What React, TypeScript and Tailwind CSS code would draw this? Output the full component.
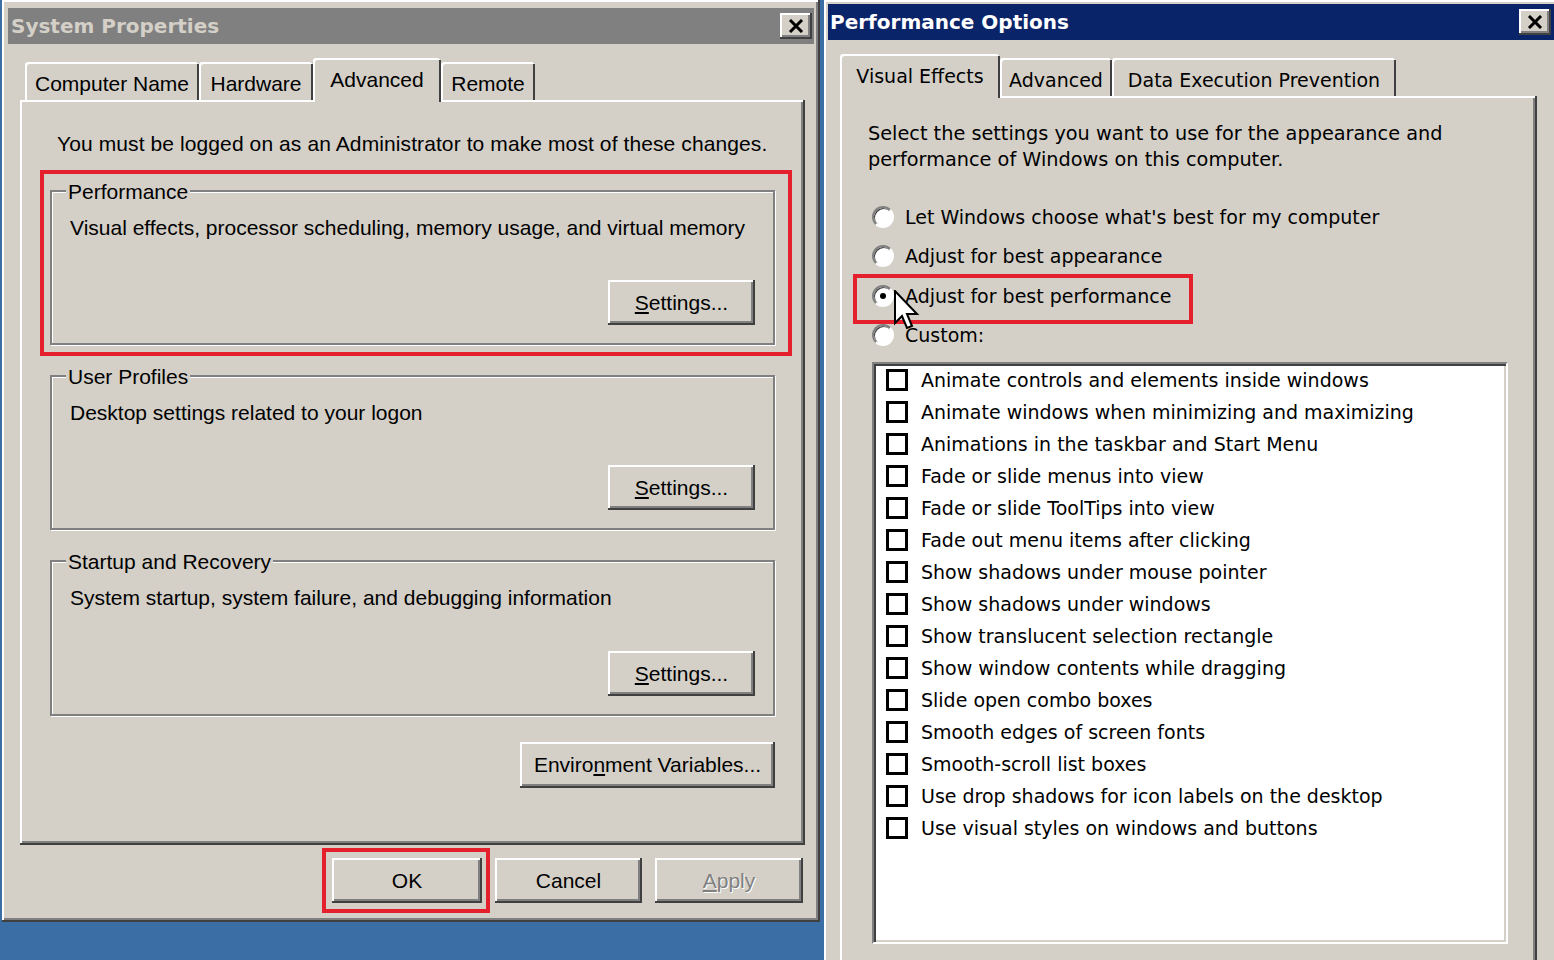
import type { ReactNode } from 'react'

const raised = 'shadow-[inset_-2px_-2px_#404040,inset_2px_2px_#ffffff,inset_-4px_-4px_#808080]'

function CloseBox() {
  return (
    <div className={`w-[32px] h-[26px] bg-[#d4d0c8] flex items-center justify-center ${raised}`}>
      <svg width="16" height="14" viewBox="0 0 16 14">
        <path d="M2 1 L14 13 M14 1 L2 13" stroke="#000" strokeWidth="3" />
      </svg>
    </div>
  )
}

function Button({ children, className = '', disabled = false }: { children: ReactNode; className?: string; disabled?: boolean }) {
  return (
    <div
      className={`flex items-center justify-center bg-[#d4d0c8] ${raised} ${className} ${
        disabled ? 'text-[#808080] [text-shadow:1px_1px_#ffffff]' : 'text-black'
      }`}
    >
      {children}
    </div>
  )
}

function GroupBox({ label, text, className }: { label: string; text: string; className: string }) {
  return (
    <div
      className={`relative mx-[30px] border-2 border-[#808080] shadow-[inset_1px_1px_#ffffff,1px_1px_#ffffff] flex flex-col justify-between ${className}`}
    >
      <span className="absolute top-[-13px] left-[14px] px-[2px] bg-[#d4d0c8] leading-[26px]">{label}</span>
      <div className="pl-[18px] pt-[23px] leading-[26px]">{text}</div>
      <div className="flex justify-end pr-[18px] pb-[18px]">
        <Button className="w-[147px] h-[45px]">
          <span>
            <u>S</u>ettings...
          </span>
        </Button>
      </div>
    </div>
  )
}

function Tab({ label, selected, width }: { label: string; selected?: boolean; width: string }) {
  return (
    <div
      className={`${width} flex items-center justify-center bg-[#d4d0c8] rounded-t-[3px] shadow-[inset_2px_2px_#ffffff,inset_-2px_0_#404040] ${
        selected ? 'relative z-10 h-[44px] mb-[-2px]' : 'h-[38px] pt-[6px]'
      }`}
    >
      {label}
    </div>
  )
}

function Radio({ checked }: { checked?: boolean }) {
  return (
    <div className="w-[22px] h-[22px] rounded-full bg-white border-2 border-t-[#808080] border-l-[#808080] border-r-white border-b-white shadow-[inset_1px_1px_#404040] flex items-center justify-center">
      {checked && <div className="w-[6px] h-[6px] rounded-full bg-black" />}
    </div>
  )
}

const effects = [
  'Animate controls and elements inside windows',
  'Animate windows when minimizing and maximizing',
  'Animations in the taskbar and Start Menu',
  'Fade or slide menus into view',
  'Fade or slide ToolTips into view',
  'Fade out menu items after clicking',
  'Show shadows under mouse pointer',
  'Show shadows under windows',
  'Show translucent selection rectangle',
  'Show window contents while dragging',
  'Slide open combo boxes',
  'Smooth edges of screen fonts',
  'Smooth-scroll list boxes',
  'Use drop shadows for icon labels on the desktop',
  'Use visual styles on windows and buttons',
]

function SystemProperties() {
  return (
    <div
      className={`shrink-0 ml-[2px] w-[818px] h-[922px] bg-[#d4d0c8] pt-[8px] px-[6px] ${raised} font-['Liberation_Sans',Arial,sans-serif] text-[21px] text-black`}
    >
      <div className="h-[36px] bg-[#808080] flex items-center justify-between pl-[3px] pr-[2px]">
        <span className="font-['DejaVu_Sans',sans-serif] font-bold text-[20px] text-[#d4d0c8]">System Properties</span>
        <CloseBox />
      </div>

      <div className="pl-[12px] pr-[9px]">
        <div className="mt-[14px] h-[42px] flex items-end pl-[5px]">
          <Tab label="Computer Name" width="w-[174px]" />
          <Tab label="Hardware" width="w-[114px]" />
          <Tab label="Advanced" width="w-[128px]" selected />
          <Tab label="Remote" width="w-[94px]" />
        </div>

        <div className={`h-[745px] w-[785px] ${raised} pt-[31px] flex flex-col`}>
          <div className="pl-[37px] leading-[26px] tracking-[0.1px]">
            You must be logged on as an Administrator to make most of these changes.
          </div>
          <GroupBox
            className="mt-[33px] h-[155px]"
            label="Performance"
            text="Visual effects, processor scheduling, memory usage, and virtual memory"
          />
          <GroupBox className="mt-[30px] h-[155px]" label="User Profiles" text="Desktop settings related to your logon" />
          <GroupBox
            className="mt-[30px] h-[156px]"
            label="Startup and Recovery"
            text="System startup, system failure, and debugging information"
          />
          <div className="mt-[26px] flex justify-end pr-[30px]">
            <Button className="w-[255px] h-[46px]">
              <span>
                Enviro<u>n</u>ment Variables...
              </span>
            </Button>
          </div>
        </div>

        <div className="mt-[13px] flex justify-end gap-[13px] pr-[2px]">
          <Button className="w-[150px] h-[45px]">OK</Button>
          <Button className="w-[147px] h-[45px]">Cancel</Button>
          <Button className="w-[148px] h-[45px]" disabled>
            <span>
              <u>A</u>pply
            </span>
          </Button>
        </div>
      </div>
    </div>
  )
}

function PerformanceOptions() {
  return (
    <div
      className={`shrink-0 ml-[4px] w-[734px] h-[1000px] bg-[#d4d0c8] p-[4px] ${raised} font-['DejaVu_Sans',sans-serif] text-[19px] text-black`}
    >
      <div className="h-[36px] bg-[#0a246a] flex items-center justify-between pl-[2px] pr-[3px]">
        <span className="font-bold text-[20px] text-white">Performance Options</span>
        <CloseBox />
      </div>

      <div className="pl-[12px]">
        <div className="mt-[16px] h-[40px] flex items-end">
          <Tab label="Visual Effects" width="w-[160px]" selected />
          <Tab label="Advanced" width="w-[112px]" />
          <Tab label="Data Execution Prevention" width="w-[284px]" />
        </div>

        <div className={`h-[900px] w-[697px] ${raised} pt-[25px]`}>
          <div className="pl-[28px] leading-[26px] text-[19.3px]">
            Select the settings you want to use for the appearance and
            <br />
            performance of Windows on this computer.
          </div>

          <div className="mt-[24px] pl-[32px]">
            {[
              "Let Windows choose what's best for my computer",
              'Adjust for best appearance',
              'Adjust for best performance',
              'Custom:',
            ].map((label, i) => (
              <div key={label} className="h-[39.5px] flex items-center gap-[11px]">
                <Radio checked={i === 2} />
                <span>{label}</span>
              </div>
            ))}
          </div>

          <div className="mt-[7px] ml-[32px] w-[636px] h-[582px] bg-white border-2 border-t-[#808080] border-l-[#808080] border-r-white border-b-white shadow-[inset_2px_2px_#404040,inset_-2px_-2px_#d4d0c8]">
            {effects.map((label) => (
              <div key={label} className="h-[32px] flex items-center pl-[12px] gap-[13px]">
                <div className="w-[22px] h-[22px] border-[3px] border-black bg-white" />
                <span>{label}</span>
              </div>
            ))}
          </div>
        </div>
      </div>
    </div>
  )
}

export default function App() {
  return (
    <div className="relative w-[1554px] h-[960px] overflow-hidden bg-[#3a6ea5] flex items-start">
      <SystemProperties />
      <PerformanceOptions />

      {/* red annotation boxes */}
      <div className="absolute left-[40px] top-[170px] w-[752px] h-[186px] border-[4px] border-[#e3202c]" />
      <div className="absolute left-[322px] top-[848px] w-[168px] h-[65px] border-[4px] border-[#e3202c]" />
      <div className="absolute left-[853px] top-[274px] w-[340px] h-[50px] border-[4px] border-[#e3202c]" />

      {/* mouse pointer */}
      <svg className="absolute left-[894px] top-[290px]" width="26" height="42" viewBox="0 0 26 42">
        <path d="M1 1 L1 33 L8 26 L13 38 L18 36 L13 24 L23 24 Z" fill="#fff" stroke="#000" strokeWidth="2" />
      </svg>
    </div>
  )
}
